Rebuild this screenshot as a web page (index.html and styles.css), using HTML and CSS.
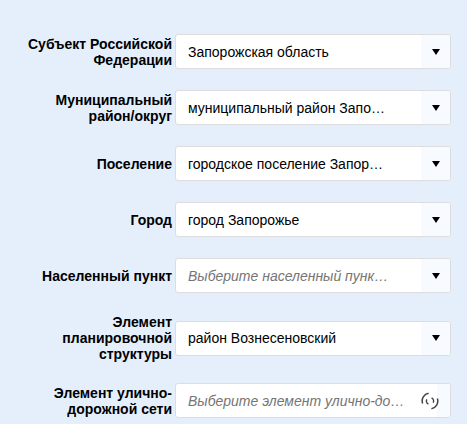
FILE: index.html
```
<!DOCTYPE html>
<html lang="ru">
<head>
  <meta charset="UTF-8">
  <meta name="viewport" content="width=device-width, initial-scale=1.0">
  <title>Адрес</title>
  <link rel="stylesheet" href="styles.css">
</head>
<body>
  <form class="address-form">
    <div class="row">
      <label for="region">Субъект Российской Федерации</label>
      <div class="field">
        <select id="region">
          <option>Запорожская область</option>
        </select>
        <span class="arrow"><svg width="8" height="6" viewBox="0 0 8 6"><path d="M0 0h8L4 6z"/></svg></span>
      </div>
    </div>
    <div class="row">
      <label for="district">Муниципальный район/округ</label>
      <div class="field">
        <select id="district">
          <option>муниципальный район Запорожский</option>
        </select>
        <span class="arrow"><svg width="8" height="6" viewBox="0 0 8 6"><path d="M0 0h8L4 6z"/></svg></span>
      </div>
    </div>
    <div class="row">
      <label for="settlement">Поселение</label>
      <div class="field">
        <select id="settlement">
          <option>городское поселение Запорожье</option>
        </select>
        <span class="arrow"><svg width="8" height="6" viewBox="0 0 8 6"><path d="M0 0h8L4 6z"/></svg></span>
      </div>
    </div>
    <div class="row">
      <label for="city">Город</label>
      <div class="field">
        <select id="city">
          <option>город Запорожье</option>
        </select>
        <span class="arrow"><svg width="8" height="6" viewBox="0 0 8 6"><path d="M0 0h8L4 6z"/></svg></span>
      </div>
    </div>
    <div class="row">
      <label for="locality">Населенный пункт</label>
      <div class="field">
        <select id="locality" class="empty">
          <option>Выберите населенный пункт из списка</option>
        </select>
        <span class="arrow"><svg width="8" height="6" viewBox="0 0 8 6"><path d="M0 0h8L4 6z"/></svg></span>
      </div>
    </div>
    <div class="row">
      <label for="plan">Элемент планировочной структуры</label>
      <div class="field">
        <select id="plan">
          <option>район Вознесеновский</option>
        </select>
        <span class="arrow"><svg width="8" height="6" viewBox="0 0 8 6"><path d="M0 0h8L4 6z"/></svg></span>
      </div>
    </div>
    <div class="row">
      <label for="street">Элемент улично-дорожной сети</label>
      <div class="field loading">
        <select id="street" class="empty">
          <option>Выберите элемент улично-дорожной сети</option>
        </select>
        <span class="arrow"></span>
        <svg class="spinner" width="18" height="18" viewBox="0 0 18 18">
          <path d="M1.6 11.4A7.8 7.8 0 0 1 7.6 1.3M16.4 6.6A7.8 7.8 0 0 1 10.4 16.7"/>
          <path d="M7.4 12.2A3.6 3.6 0 0 1 5.8 7.4M10.6 5.8A3.6 3.6 0 0 1 12.2 10.6"/>
        </svg>
      </div>
    </div>
  </form>
</body>
</html>
```
FILE: styles.css
```
body {
  margin: 0;
  background-color: #e5effc;
  font-family: "Liberation Sans", Arial, sans-serif;
  font-size: 14px;
  line-height: 16px;
  color: #000;
}
.address-form {
  display: flex;
  flex-direction: column;
  gap: 21px;
  padding: 34px 16px 6px;
}
.row {
  display: flex;
  align-items: center;
  gap: 3px;
}
label {
  flex: none;
  box-sizing: border-box;
  width: 156px;
  font-weight: bold;
  text-align: right;
}
.field {
  position: relative;
  flex: 1;
  min-width: 0;
  height: 33px;
  border: 1px solid #ddd;
  border-radius: 3px;
  background-color: #fff;
}
select {
  appearance: none;
  display: block;
  box-sizing: border-box;
  width: 100%;
  height: 100%;
  margin: 0;
  padding: 0 60px 0 12px;
  border: 0;
  background: none;
  font: inherit;
  color: inherit;
  white-space: nowrap;
  overflow: hidden;
  text-overflow: ellipsis;
}
select.empty {
  font-style: italic;
  color: #757575;
}
.arrow {
  position: absolute;
  top: 0;
  right: 0;
  bottom: 0;
  width: 29px;
  display: flex;
  align-items: center;
  justify-content: center;
  border-radius: 0 2px 2px 0;
  background-color: #f7fbff;
  pointer-events: none;
}
.loading select {
  padding-right: 44px;
}
.loading .arrow {
  width: 13px;
}
.spinner {
  position: absolute;
  top: 8px;
  right: 11px;
  fill: none;
  stroke: #444;
  stroke-width: 1.5;
  pointer-events: none;
}
```
